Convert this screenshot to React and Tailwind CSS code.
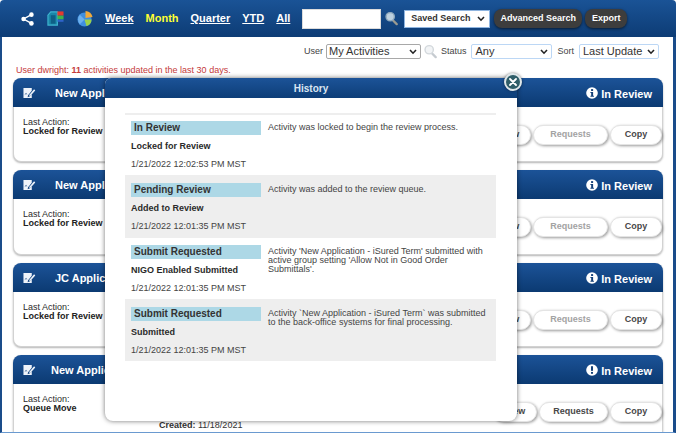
import React from "react";

const font = { fontFamily: '"Liberation Sans", Arial, sans-serif' };

function Share() {
  return (
    <svg width="15" height="14" viewBox="0 0 16 16" className="shrink-0">
      <path d="M12.5 3 L3.5 8 L12.5 13" stroke="#fff" strokeWidth="1.6" fill="none" />
      <circle cx="12.5" cy="3" r="2.6" fill="#fff" />
      <circle cx="3.5" cy="8" r="2.6" fill="#fff" />
      <circle cx="12.5" cy="13" r="2.6" fill="#fff" />
    </svg>
  );
}

function Board() {
  return (
    <svg width="17" height="17" viewBox="0 0 18 17" className="shrink-0">
      <path d="M4 1.5 H11 V15.5 H1 V5 Z" fill="#1b87a8" stroke="#3fb4d0" strokeWidth="1.2" />
      <rect x="4" y="5" width="5" height="9" fill="#0f5f86" />
      <rect x="11" y="1" width="6.5" height="4.5" fill="#e53a2f" />
      <rect x="11" y="5.5" width="6.5" height="4" fill="#3fb449" />
      <rect x="11" y="9.5" width="6.5" height="2.5" fill="#2f63c9" />
    </svg>
  );
}

function Pie() {
  return (
    <svg width="16" height="17" viewBox="0 0 17 18" className="shrink-0">
      <circle cx="8" cy="10" r="7.5" fill="#3f8fe0" />
      <path d="M8 10 L8 2.5 A7.5 7.5 0 0 1 15.5 9 Z" fill="#f0a93a" transform="translate(1 -1.5)" />
      <path d="M8 10 L15.5 10 A7.5 7.5 0 0 1 10 17 Z" fill="#9bd24a" />
      <path d="M3 5 A7.5 7.5 0 0 0 3 15 L8 10 Z" fill="#7fbdf2" opacity="0.7" />
    </svg>
  );
}

function Magnifier({ pale }) {
  const c = pale ? "#d3d8dc" : "#8fa9bd";
  return (
    <svg width="13" height="15" viewBox="0 0 15 16" className="shrink-0">
      <line x1="8.5" y1="9.5" x2="13.5" y2="14.5" stroke={pale ? "#c6cbd0" : "#9a9a90"} strokeWidth="2.6" strokeLinecap="round" />
      <circle cx="6" cy="6" r="4.8" fill={pale ? "#f2f4f6" : "#bcd0df"} stroke={c} strokeWidth="1.6" />
    </svg>
  );
}

function NoteIcon() {
  return (
    <svg width="14" height="12" viewBox="0 0 14 13" className="shrink-0">
      <path d="M1 1 H10 V4 L6 9 L5.5 11 L8 10 L10 8 V12 H1 Z" fill="#eef3fa" />
      <path d="M7 9 L12.5 2.5 L13.8 3.7 L8.2 10 Z" fill="#eef3fa" />
      <path d="M2.5 8 Q4 6 5 8" stroke="#16477f" strokeWidth="0.8" fill="none" />
    </svg>
  );
}

function InfoIcon({ alert }) {
  return (
    <svg width="12" height="12" viewBox="0 0 13 13" className="shrink-0 -mt-[2px]">
      <circle cx="6.5" cy="6.5" r="6.3" fill="#fff" />
      {alert ? (
        <g fill="#123f78">
          <rect x="5.4" y="2.4" width="2.2" height="5" />
          <rect x="5.4" y="8.6" width="2.2" height="2" />
        </g>
      ) : (
        <g fill="#123f78">
          <rect x="5.5" y="2.3" width="2.2" height="2" />
          <path d="M4.8 5.3 H7.7 V9.4 H8.6 V10.6 H4.8 V9.4 H5.6 V6.5 H4.8 Z" />
        </g>
      )}
    </svg>
  );
}

function Chevron() {
  return (
    <svg width="8" height="6" viewBox="0 0 8 6" className="shrink-0">
      <path d="M1 1 L4 4.2 L7 1" stroke="#222" strokeWidth="1.6" fill="none" />
    </svg>
  );
}

function PillButton({ children, muted, w = "w-[52px]" }) {
  return (
    <div
      className={`h-[20px] ${w} rounded-[10px] bg-white border border-[#e4e4e4] shadow-[1px_1px_3px_rgba(0,0,0,0.4)] flex items-center justify-center text-[9px] font-bold ${muted ? "text-[#a3a3a3]" : "text-[#484848]"}`}
    >
      {children}
    </div>
  );
}

function Card({ title, action, requestsMuted, created, height = "h-[84px]", indent = "ml-[19px]", requestsW = "w-[75px]", alert }) {
  return (
    <div className={`${height} shrink-0 rounded-[8px] bg-white border-x border-b border-[#d2d2d2] shadow-[0_1px_2px_rgba(0,0,0,0.3)] flex flex-col`}>
      <div className="h-[29px] -mx-px shrink-0 rounded-t-[8px] bg-gradient-to-b from-[#1c5398] to-[#0b3a72] flex items-center pl-[9px] pr-[11px] text-white">
        <NoteIcon />
        <span className={`${indent} pt-[1px] text-[11px] font-bold whitespace-nowrap`}>{title}</span>
        <span className="ml-auto pt-[3px] flex items-center gap-[3px] text-[11px] font-bold">
          <InfoIcon alert={alert} />
          In Review
        </span>
      </div>
      <div className="flex-1 flex">
        <div className="ml-[9px] mt-[11px] text-[9px] leading-[9px] text-[#2b2b2b]">
          <div>Last Action:</div>
          <div className="font-bold text-[#222]">{action}</div>
        </div>
        <div className="ml-auto mt-[18px] flex gap-[2px]">
          <PillButton w="w-[44px]">View</PillButton>
          <PillButton muted={requestsMuted} w={requestsW}>Requests</PillButton>
          <PillButton>Copy</PillButton>
        </div>
      </div>
      {created && (
        <div className="absolute left-[159px] top-[420px] text-[9px] leading-[11px] text-[#333]">
          <b>Created:</b> 11/18/2021
        </div>
      )}
    </div>
  );
}

const rows = [
  {
    status: "In Review",
    sub: "Locked for Review",
    time: "1/21/2022 12:02:53 PM MST",
    text: "Activity was locked to begin the review process.",
    h: "h-[60px] pt-[6px]",
    bg: "bg-white",
  },
  {
    status: "Pending Review",
    sub: "Added to Review",
    time: "1/21/2022 12:01:35 PM MST",
    text: "Activity was added to the review queue.",
    h: "h-[63px] pt-[8px]",
    bg: "bg-[#eeeeee]",
  },
  {
    status: "Submit Requested",
    sub: "NIGO Enabled Submitted",
    time: "1/21/2022 12:01:35 PM MST",
    text: "Activity 'New Application - iSured Term' submitted with active group setting 'Allow Not in Good Order Submittals'.",
    h: "h-[61px] pt-[7px]",
    bg: "bg-white",
  },
  {
    status: "Submit Requested",
    sub: "Submitted",
    time: "1/21/2022 12:01:35 PM MST",
    text: "Activity `New Application - iSured Term` was submitted to the back-office systems for final processing.",
    h: "h-[62px] pt-[8px]",
    bg: "bg-[#eeeeee]",
  },
];

function HistoryRow({ r }) {
  return (
    <div className={`${r.h} ${r.bg} flex pl-[6px] shrink-0`}>
      <div className="w-[137px] shrink-0">
        <div className="h-[14px] w-[130px] bg-[#add8e6] pl-[3px] text-[10px] leading-[14px] font-bold text-[#333]">{r.status}</div>
        <div className="mt-[5px] text-[9px] leading-[12px] font-bold text-[#2a2a2a] whitespace-nowrap">{r.sub}</div>
        <div className="mt-[6px] text-[9px] leading-[12px] text-[#444] whitespace-nowrap">{r.time}</div>
      </div>
      <div className="w-[222px] pt-[2px] text-[9px] leading-[9px] text-[#444]">{r.text}</div>
    </div>
  );
}

function FilterSelect({ w, value }) {
  return (
    <div className={`${w} ml-[5px] h-[15px] border border-[#bcd7f5] rounded-[2px] flex items-center justify-between pl-[3px] pr-[3px] text-[11px] text-[#333] whitespace-nowrap`}>
      {value}
      <Chevron />
    </div>
  );
}

export default function App() {
  return (
    <div style={font} className="relative w-[676px] h-[433px] overflow-hidden bg-white flex flex-col">
      <div className="h-[37px] shrink-0 flex items-center rounded-t-[4px] bg-gradient-to-b from-[#1a5396] to-[#0d3c75] pl-[20px] text-white">
        <Share />
        <span className="ml-[12px]"><Board /></span>
        <span className="ml-[13px]"><Pie /></span>
        <nav className="ml-[12px] flex items-center gap-[12px] text-[11px] font-bold">
          <span className="underline">Week</span>
          <span className="text-[#ffff33]">Month</span>
          <span className="underline">Quarter</span>
          <span className="underline">YTD</span>
          <span className="underline">All</span>
        </nav>
        <div className="ml-[12px] w-[79px] h-[20px] bg-white border border-[#dcdcdc]" />
        <span className="ml-[4px]"><Magnifier /></span>
        <div className="ml-[6px] w-[86px] h-[18px] bg-white border border-[#8fb5e0] flex items-center justify-between pl-[6px] pr-[4px] text-[9px] font-bold text-[#333] whitespace-nowrap">
          Saved Search
          <Chevron />
        </div>
        <div className="ml-[4px] h-[19px] w-[88px] rounded-[8px] bg-[#3d3d3d] shadow-[0_1px_3px_rgba(0,0,0,0.6)] flex items-center justify-center text-[9px] font-bold">Advanced Search</div>
        <div className="ml-[3px] h-[19px] w-[42px] rounded-[8px] bg-[#3d3d3d] shadow-[0_1px_3px_rgba(0,0,0,0.6)] flex items-center justify-center text-[9px] font-bold">Export</div>
      </div>

      <div className="flex-1 min-h-0 bg-white border-l-2 border-r-[3px] border-b border-l-[#1a4c8a] border-r-[#1a4c8a] border-b-[#6a9ad0] pl-[11px] pr-[10px] flex flex-col overflow-hidden">
        <div className="h-[23px] shrink-0 flex items-end justify-end pr-[4px] pb-[1px] text-[9px] leading-[15px] text-[#444]">
          <span>User</span>
          <div className="ml-[3px] w-[95px] h-[15px] border border-[#a8a8a8] rounded-[2px] flex items-center justify-between pl-[2px] pr-[3px] text-[11px] text-[#333] whitespace-nowrap">
            My Activities
            <Chevron />
          </div>
          <span className="ml-[3px] mr-[4px]"><Magnifier pale /></span>
          <span>Status</span>
          <FilterSelect w="w-[81px]" value="Any" />
          <span className="ml-[5px]">Sort</span>
          <FilterSelect w="w-[80px]" value="Last Update" />
        </div>
        <div className="h-[14px] shrink-0 mt-[3px] pl-[3px] text-[9px] leading-[14px] text-[#c43a3a] whitespace-nowrap">
          User dwright: <b>11</b> activities updated in the last 30 days.
        </div>
        <div className="flex flex-col gap-[8px] shrink-0 mt-[1px]">
          <Card title="New Application" action="Locked for Review" requestsMuted />
          <Card title="New Application" action="Locked for Review" requestsMuted height="h-[85px]" />
          <Card title="JC Application" action="Locked for Review" requestsMuted />
          <Card title="New Application" action="Queue Move" created indent="ml-[15px]" requestsW="w-[69px]" alert />
        </div>
      </div>

      <div className="absolute left-[105px] top-[78px] w-[412px] h-[343px] rounded-b-[8px] rounded-t-[6px] bg-white shadow-[0_0_5px_rgba(0,0,0,0.55)] flex flex-col overflow-hidden">
        <div className="h-[20px] shrink-0 bg-gradient-to-b from-[#1c5398] to-[#0d3e78] flex items-center justify-center text-[10px] font-bold text-[#dbe6f2]">History</div>
        <div className="mt-[15px] ml-[20px] w-[371px] flex flex-col border-t-2 border-[#eeeeee]">
          {rows.map((r, i) => (
            <HistoryRow key={i} r={r} />
          ))}
        </div>
      </div>
      <div className="absolute left-[504px] top-[73px] w-[18px] h-[18px] rounded-full bg-[#2f5d68] border-2 border-[#dfe7ea] shadow-[0_0_3px_rgba(0,0,0,0.5)] flex items-center justify-center">
        <svg width="8" height="8" viewBox="0 0 8 8">
          <path d="M1 1 L7 7 M7 1 L1 7" stroke="#fff" strokeWidth="1.8" strokeLinecap="round" />
        </svg>
      </div>
    </div>
  );
}
